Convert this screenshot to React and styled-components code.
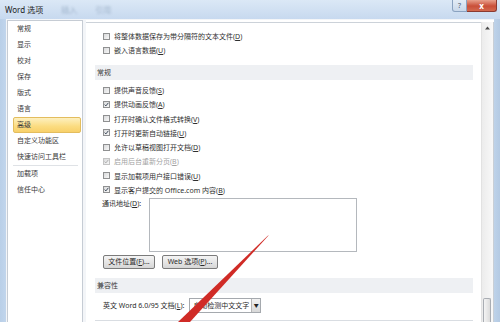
import styled, { createGlobalStyle } from "styled-components";

const GlobalStyle = createGlobalStyle`
  body {
    margin: 0;
    font-family: "Noto Sans", "Noto Sans CJK SC", sans-serif;
    color: #2b2b2b;
  }
`;

const Window = styled.div`
  position: relative;
  width: 500px;
  height: 322px;
  overflow: hidden;
  display: flex;
  flex-direction: column;
  background: linear-gradient(to right, #b9cfe8, #cddff2 3%, #cddff2 97%, #b4cae3);
`;

const TitleBar = styled.div`
  height: 19px;
  flex-shrink: 0;
  display: flex;
  align-items: center;
  padding-left: 5px;
  background: linear-gradient(#dbe8f6, #c7d9ef);
`;

const Title = styled.span`
  font-size: 8px;
  line-height: 10px;
  color: #1c1c1c;
`;

const Ghost = styled.span`
  font-size: 8px;
  color: #9fb3ca;
  filter: blur(1.2px);
  margin-left: ${(p) => p.gap}px;
`;

const WindowButtons = styled.div`
  margin-left: auto;
  margin-right: 3px;
  align-self: flex-start;
  display: flex;
`;

const HelpButton = styled.div`
  width: 15px;
  height: 12px;
  box-sizing: border-box;
  border: 1px solid #8aa2c0;
  border-top: none;
  border-radius: 0 0 0 3px;
  background: linear-gradient(#e3ecf6, #c9d8ea);
  font-size: 7px;
  line-height: 11px;
  text-align: center;
  color: #4d5e74;
`;

const CloseButton = styled.div`
  width: 30px;
  height: 12px;
  box-sizing: border-box;
  border: 1px solid #8b3a30;
  border-top: none;
  border-left: none;
  border-radius: 0 0 3px 0;
  background: linear-gradient(#e8a08c, #c94f38 55%, #d3694f);
  color: #fff;
  font-size: 8px;
  font-weight: bold;
  line-height: 11px;
  text-align: center;
`;

const Body = styled.div`
  flex: 1;
  min-height: 0;
  display: flex;
  gap: 3px;
  margin: 0 6px 0 6px;
  padding: 1px 0 0 1px;
  background: #f3f5f8;
`;

const Nav = styled.div`
  width: 76px;
  box-sizing: border-box;
  flex-shrink: 0;
  background: #fff;
  border: 1px solid #c6ccd4;
  border-bottom: none;
  font-size: 7px;
`;

const NavItem = styled.div`
  height: 16px;
  line-height: 14px;
  box-sizing: border-box;
  margin: 0 1px 0 5px;
  padding-left: 3px;
  border: 1px solid ${(p) => (p.$active ? "#e3bd5e" : "transparent")};
  border-radius: 2px;
  background: ${(p) =>
    p.$active ? "linear-gradient(#fdf0c0, #fbdc80 60%, #f8d06a)" : "transparent"};
  color: #3a3a3a;
  white-space: nowrap;
`;

const NavSeparator = styled.div`
  height: 1px;
  margin: 0 4px 0 5px;
  background: #dfe2e6;
`;

const ContentPane = styled.div`
  flex: 1;
  display: flex;
  padding-top: 2px;
  background: #fff;
`;

const Scroller = styled.div`
  flex: 1;
  border-top: 1px solid #ccd2d9;
  padding: 6px 8px 0 9px;
  font-size: 7px;
`;

const Row = styled.div`
  height: 14.25px;
  display: flex;
  align-items: center;
  padding-left: 8px;
  gap: 4px;
  white-space: nowrap;
  color: ${(p) => (p.$disabled ? "#a3a3a3" : "#2f2f2f")};
`;

const Box = styled.span`
  width: 7px;
  height: 7px;
  box-sizing: border-box;
  flex-shrink: 0;
  border: 1px solid ${(p) => (p.$disabled ? "#c4c4c4" : "#8f9091")};
  background: linear-gradient(135deg, #d9dadb, #f7f7f7);
  display: flex;
  align-items: center;
  justify-content: center;
`;

const Band = styled.div`
  height: 15px;
  line-height: 15px;
  margin-top: ${(p) => p.$top}px;
  padding-left: 2px;
  background: #eef0f3;
  color: #3a3a3a;
`;

const AddressRow = styled.div`
  display: flex;
  align-items: flex-start;
  padding-left: 7px;
`;

const AddressLabel = styled.span`
  width: 47px;
  line-height: 14px;
`;

const AddressBox = styled.div`
  width: 208px;
  height: 54px;
  box-sizing: border-box;
  margin-top: 1px;
  border: 1px solid #b4b8bd;
  background: #fff;
`;

const ButtonRow = styled.div`
  display: flex;
  gap: 7px;
  margin-top: 3px;
  padding-left: 8px;
`;

const Button = styled.div`
  width: ${(p) => p.$w}px;
  height: 14px;
  box-sizing: border-box;
  border: 1px solid #7b7b7b;
  border-radius: 2px;
  background: linear-gradient(#f4f4f4, #e6e6e6 50%, #d6d6d6);
  text-align: center;
  line-height: 12px;
  color: #2b2b2b;
`;

const CompatRow = styled.div`
  height: 16px;
  display: flex;
  align-items: center;
  margin-top: 4px;
  padding-left: 8px;
  gap: 5px;
  white-space: nowrap;
`;

const Select = styled.div`
  width: 72px;
  height: 15px;
  box-sizing: border-box;
  border: 1px solid #a5a9ae;
  background: #fff;
  display: flex;
  align-items: center;
  padding-left: 3px;
`;

const SelectArrow = styled.span`
  margin-left: auto;
  width: 9px;
  height: 13px;
  box-sizing: border-box;
  border-left: 1px solid #b6b6b6;
  background: linear-gradient(#f2f2f2, #d8d8d8);
  font-size: 5px;
  line-height: 13px;
  text-align: center;
  color: #222;
`;

const BottomLine = styled.div`
  height: 1px;
  margin-top: 7px;
  background: #d9dde2;
`;

const Scrollbar = styled.div`
  width: 13px;
  box-sizing: border-box;
  display: flex;
  flex-direction: column;
  border-left: 1px solid #e2e2e2;
  border-right: 1px solid #c9cfd6;
  background: linear-gradient(to right, #ececec, #f8f8f8);
`;

const ScrollArrow = styled.div`
  height: 12px;
  display: flex;
  align-items: center;
  justify-content: center;
`;

const ScrollThumb = styled.div`
  margin-top: auto;
  height: 24px;
  margin-left: 1px;
  margin-right: 2px;
  box-sizing: border-box;
  border: 1px solid #a9adb3;
  border-bottom: none;
  border-radius: 2px 2px 0 0;
  background: linear-gradient(to right, #f4f4f4, #dcdcdc);
`;

const Arrow = styled.svg`
  position: absolute;
  left: 0;
  top: 0;
  pointer-events: none;
`;

const navItems = ["常规", "显示", "校对", "保存", "版式", "语言", "高级", "自定义功能区", "快速访问工具栏"];
const navExtra = ["加载项", "信任中心"];

const generalRows = [
  { text: "提供声音反馈", key: "S" },
  { text: "提供动画反馈", key: "A", checked: true },
  { text: "打开时确认文件格式转换", key: "V" },
  { text: "打开时更新自动链接", key: "U", checked: true },
  { text: "允许以草稿视图打开文档", key: "D" },
  { text: "启用后台重新分页", key: "B", checked: true, disabled: true },
  { text: "显示加载项用户接口错误", key: "U" },
  { text: "显示客户提交的 Office.com 内容", key: "B", checked: true },
];

function Check({ checked, disabled }) {
  return (
    <Box $disabled={disabled}>
      {checked && (
        <svg width="5" height="5" viewBox="0 0 5 5">
          <path
            d="M0.6 2.6 L1.9 3.9 L4.4 0.8"
            fill="none"
            stroke={disabled ? "#a8a8a8" : "#2c3a4c"}
            strokeWidth="0.9"
          />
        </svg>
      )}
    </Box>
  );
}

function CheckRow({ text, k, checked, disabled }) {
  return (
    <Row $disabled={disabled}>
      <Check checked={checked} disabled={disabled} />
      <span>
        {text}(<u>{k}</u>)
      </span>
    </Row>
  );
}

export default function App() {
  return (
    <>
      <GlobalStyle />
      <Window>
        <TitleBar>
          <Title>Word 选项</Title>
          <Ghost gap={18}>插入</Ghost>
          <Ghost gap={18}>引用</Ghost>
          <WindowButtons>
            <HelpButton>?</HelpButton>
            <CloseButton>x</CloseButton>
          </WindowButtons>
        </TitleBar>
        <Body>
          <Nav>
            {navItems.map((item) => (
              <NavItem key={item} $active={item === "高级"}>
                {item}
              </NavItem>
            ))}
            <NavSeparator />
            {navExtra.map((item) => (
              <NavItem key={item}>{item}</NavItem>
            ))}
          </Nav>
          <ContentPane>
            <Scroller>
              <CheckRow text="将整体数据保存为带分隔符的文本文件" k="D" />
              <CheckRow text="嵌入语言数据" k="U" />
              <Band $top={7.5}>常规</Band>
              <div style={{ height: 3 }} />
              {generalRows.map((r, i) => (
                <CheckRow
                  key={i}
                  text={r.text}
                  k={r.key}
                  checked={r.checked}
                  disabled={r.disabled}
                />
              ))}
              <AddressRow>
                <AddressLabel>
                  通讯地址(<u>D</u>):
                </AddressLabel>
                <AddressBox />
              </AddressRow>
              <ButtonRow>
                <Button $w={52}>
                  文件位置(<u>F</u>)...
                </Button>
                <Button $w={56}>
                  Web 选项(<u>P</u>)...
                </Button>
              </ButtonRow>
              <Band $top={9}>兼容性</Band>
              <CompatRow>
                <span>
                  英文 Word 6.0/95 文档(<u>L</u>):
                </span>
                <Select>
                  自动检测中文文字
                  <SelectArrow>▼</SelectArrow>
                </Select>
              </CompatRow>
              <BottomLine />
            </Scroller>
            <Scrollbar>
              <ScrollArrow>
                <svg width="5" height="4" viewBox="0 0 5 4">
                  <path d="M0 3.5 L2.5 0.5 L5 3.5 Z" fill="#4a4a4a" />
                </svg>
              </ScrollArrow>
              <ScrollThumb />
            </Scrollbar>
          </ContentPane>
        </Body>
        <Arrow width="500" height="322" viewBox="0 0 500 322">
          <polygon points="269,235 190,322 178,322 267.5,236" fill="#d02b26" />
        </Arrow>
      </Window>
    </>
  );
}
